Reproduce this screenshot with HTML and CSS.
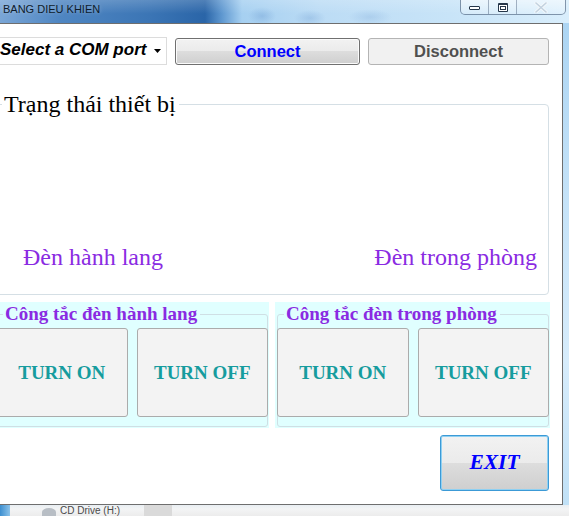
FILE: index.html
```html
<!DOCTYPE html>
<html lang="vi">
<head>
<meta charset="utf-8">
<title>BANG DIEU KHIEN</title>
<link rel="stylesheet" href="styles.css">
</head>
<body>
<div class="screen">
  <div class="titlebar">
    <span class="title">BANG DIEU KHIEN</span>
    <div class="controls">
      <span class="ctl min"><i class="min-glyph"></i></span>
      <span class="ctl max"><i class="max-glyph"></i></span>
      <span class="ctl close">
        <svg width="14" height="11" viewBox="0 0 14 11"><path d="M2 1 L12 10 M12 1 L2 10" stroke="#f4f8fb" stroke-width="3.2" stroke-linecap="round"/><path d="M2 1 L12 10 M12 1 L2 10" stroke="#c3d2df" stroke-width="1.6" stroke-linecap="round"/></svg>
      </span>
    </div>
  </div>
  <div class="client">
    <div class="form">
      <div class="toolbar">
        <div class="combo">
          <span class="combo-text">Select a COM port</span>
          <svg class="combo-arrow" width="7" height="4" viewBox="0 0 7 4"><path d="M0 0 H7 L3.5 4 Z" fill="#000"/></svg>
        </div>
        <button class="btn connect">Connect</button>
        <button class="btn disconnect">Disconnect</button>
      </div>
      <fieldset class="status">
        <legend>Trạng thái thiết bị</legend>
        <div class="lamps">
          <span>Đèn hành lang</span>
          <span>Đèn trong phòng</span>
        </div>
      </fieldset>
      <div class="switches">
        <div class="panel">
          <fieldset class="switch">
            <legend>Công tắc đèn hành lang</legend>
            <div class="pair">
              <button class="turn">TURN ON</button>
              <button class="turn">TURN OFF</button>
            </div>
          </fieldset>
        </div>
        <div class="panel">
          <fieldset class="switch">
            <legend>Công tắc đèn trong phòng</legend>
            <div class="pair">
              <button class="turn">TURN ON</button>
              <button class="turn">TURN OFF</button>
            </div>
          </fieldset>
        </div>
      </div>
      <div class="footer">
        <button class="exit">EXIT</button>
      </div>
    </div>
  </div>
  <div class="taskbar">
    <span class="tb-glow"></span>
    <span class="tb-icon"></span>
    <span class="tb-text">CD Drive (H:)</span>
    <span class="tb-box"></span>
  </div>
</div>
</body>
</html>
```
FILE: styles.css
```css
* { box-sizing: border-box; }
html, body { margin: 0; padding: 0; }
body {
  width: 569px;
  height: 516px;
  overflow: hidden;
  background: #cfe6f8;
}
.screen {
  width: 569px;
  height: 516px;
  display: flex;
  flex-direction: column;
  overflow: hidden;
  background: linear-gradient(to bottom, #a9d3f2 0, #c6e3f8 40%, #d7ecfb 70%, #bfe0f6 100%);
}

/* Title bar */
.titlebar {
  height: 23px;
  flex: none;
  display: flex;
  align-items: flex-start;
  background:
    linear-gradient(to bottom, rgba(255,255,255,0.18), rgba(255,255,255,0) 60%),
    radial-gradient(ellipse 14px 9px at 262px 16px, rgba(90,140,200,0.3), rgba(90,140,200,0) 100%),
    radial-gradient(ellipse 16px 8px at 310px 18px, rgba(90,140,200,0.25), rgba(90,140,200,0) 100%),
    radial-gradient(ellipse 22px 8px at 370px 17px, rgba(90,140,200,0.2), rgba(90,140,200,0) 100%),
    linear-gradient(to right, #7aa6d6 0px, #4f86c2 60px, #3b75b5 150px, #2a65a8 205px, #5f98d0 222px, #a6d0f1 242px, #bcdcf5 320px, #c8e4f8 450px, #d9eefc 569px);
}
.title {
  font: 11px/11px "Liberation Sans", Arial, sans-serif;
  color: #0e1c2c;
  padding: 4px 0 0 3px;
  white-space: nowrap;
  text-shadow: 0 0 4px rgba(255,255,255,0.35);
}
.controls {
  margin-left: auto;
  margin-right: 3px;
  display: flex;
  height: 15px;
  border: 1px solid rgba(55,75,105,0.55);
  border-top: 0;
  border-radius: 0 0 5px 5px;
  overflow: hidden;
}
.ctl {
  display: flex;
  align-items: center;
  justify-content: center;
  height: 100%;
  background: linear-gradient(to bottom, rgba(255,255,255,0.55), rgba(255,255,255,0.2));
}
.ctl + .ctl { border-left: 1px solid rgba(55,75,105,0.4); }
.min { width: 27px; align-items: flex-end; padding-bottom: 4px; }
.max { width: 28px; }
.close { width: 49px; background: linear-gradient(to bottom, rgba(255,255,255,0.45), rgba(255,255,255,0.15)); }
.min-glyph {
  display: block;
  width: 11px;
  height: 4px;
  border: 1px solid #26374a;
  background: #fff;
  border-radius: 1px;
}
.max-glyph {
  display: block;
  width: 10px;
  height: 9px;
  border: 1px solid #26374a;
  border-top-width: 2px;
  background: #fff;
  box-shadow: inset 0 0 0 1px #fff, inset 0 0 0 2px #26374a;
  border-radius: 1px;
}

/* Client area */
.client {
  flex: none;
  width: 563px;
  height: 482px;
  background: #fff;
  border: 1px solid #6e6e6e;
  border-left: 0;
  overflow: hidden;
}
.form {
  width: 556px;
  margin-left: -6px;
  padding-top: 13px;
}

.toolbar {
  display: flex;
  gap: 8px;
  align-items: flex-start;
}
.combo {
  width: 173px;
  height: 28px;
  border: 1px solid #dcdcdc;
  background: #fff;
  display: flex;
  align-items: center;
  justify-content: space-between;
  padding: 0 5px 2px 5px;
}
.combo-text {
  font: italic bold 17px/20px "Liberation Sans", Arial, sans-serif;
  color: #000;
  white-space: nowrap;
}
.combo-arrow { margin-top: 2px; }

.btn {
  height: 27px;
  margin-top: 1px;
  padding: 0;
  font: bold 16.5px/1 "Liberation Sans", Arial, sans-serif;
  border-radius: 3px;
}
.connect {
  width: 185px;
  color: #0000ff;
  border: 1px solid #707070;
  background: linear-gradient(to bottom, #f2f2f2 0%, #ebebeb 50%, #dddddd 50%, #cfcfcf 100%);
  box-shadow: inset 0 0 0 1px #fbfbfb;
}
.disconnect {
  width: 181px;
  color: #505050;
  border: 1px solid #b4b4b4;
  background: #f1f1f1;
}

/* Status group */
.status {
  margin: 25px 1px 0 2px;
  padding: 0;
  min-width: 0;
  border: 1px solid #d5dfe5;
  border-radius: 4px;
}
.status legend {
  margin-left: 5px;
  padding: 0 3px 0 2px;
  font: 24px/28px "Liberation Serif", "Times New Roman", serif;
  color: #000;
}
.lamps {
  display: flex;
  justify-content: space-between;
  padding: 125px 11px 23px 26px;
  font: 24px/28px "Liberation Serif", "Times New Roman", serif;
  color: #8a2be2;
}

/* Switch groups */
.switches {
  display: flex;
  gap: 6px;
  margin-top: 7px;
}
.panel {
  width: 275px;
  background: #e0ffff;
  padding: 1px 1px 1px 2px;
}
.switch {
  margin: 0;
  padding: 0 0 9px;
  min-width: 0;
  border: 1px solid #cfdfe4;
  border-radius: 3px;
}
.switch legend {
  margin-left: 6px;
  padding: 0 3px 0 2px;
  font: bold 19px/22px "Liberation Serif", "Times New Roman", serif;
  color: #8a2be2;
}
.pair {
  display: grid;
  grid-template-columns: 1fr 1fr;
  gap: 9px;
  margin: 3px -1px 0;
}
.turn {
  height: 89px;
  padding: 0;
  background: #f3f3f3;
  border: 1px solid #ababab;
  border-radius: 3px;
  font: bold 19px/1 "Liberation Serif", "Times New Roman", serif;
  color: #169c9e;
}

/* Footer */
.footer {
  display: flex;
  justify-content: flex-end;
  padding-right: 1px;
  margin-top: 7px;
}
.exit {
  width: 109px;
  height: 56px;
  padding: 0;
  border: 1px solid #3c9ad6;
  border-radius: 3px;
  background: linear-gradient(to bottom, #f2f2f2 0%, #ebebeb 50%, #dddddd 50%, #cfcfcf 100%);
  box-shadow: inset 0 0 0 1px #8fd0f2;
  font: italic bold 21.5px/1 "Liberation Sans", Arial, sans-serif;
  font-family: "Liberation Serif", "Times New Roman", serif;
  color: #0000ff;
}

/* Strip below the window */
.taskbar {
  flex: 1;
  display: flex;
  align-items: flex-start;
  overflow: hidden;
  background: linear-gradient(to bottom, #e9eef3 0, #f3f4f5 4px, #ececec 100%);
}
.tb-glow {
  width: 10px;
  height: 11px;
  background: linear-gradient(to right, #3d8fd0, #8cc3ea);
  flex: none;
}
.tb-icon {
  width: 14px;
  height: 8px;
  margin: 3px 0 0 32px;
  border-radius: 50% 50% 0 0;
  background: #b8bec5;
  flex: none;
}
.tb-text {
  margin: 0 0 0 4px;
  font: 10px/11px "Liberation Sans", Arial, sans-serif;
  color: #4a4a4a;
  white-space: nowrap;
}
.tb-box {
  width: 28px;
  height: 11px;
  margin-left: 24px;
  background: #dadada;
  flex: none;
}
```
